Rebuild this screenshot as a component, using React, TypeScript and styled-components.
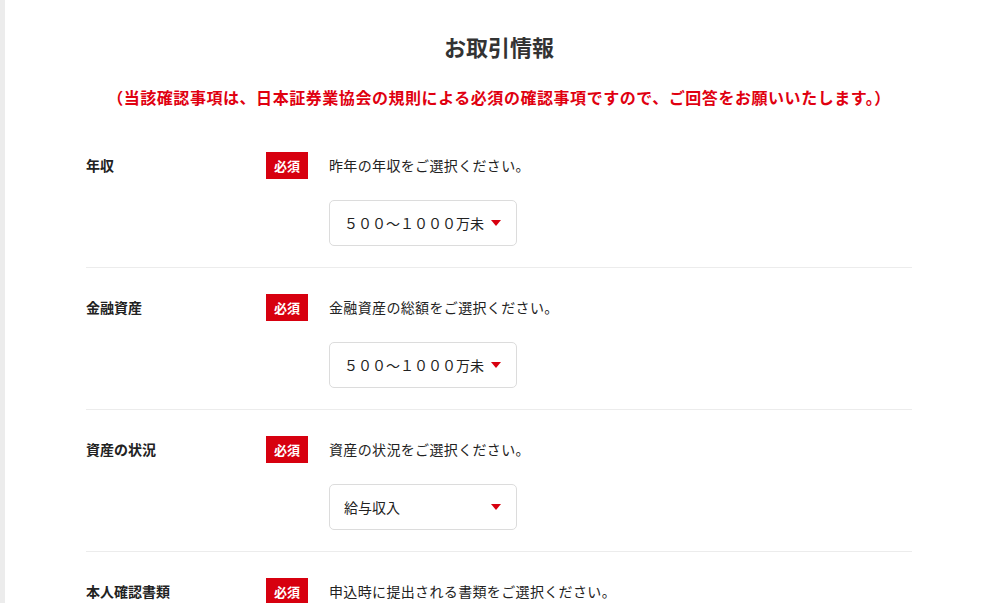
import styled, { createGlobalStyle } from "styled-components";

const GlobalStyle = createGlobalStyle`
  html, body {
    margin: 0;
    padding: 0;
    background: #fff;
  }
  body {
    font-family: "Noto Sans CJK JP", "Noto Sans", sans-serif;
    color: #222;
  }
`;

const Page = styled.div`
  display: flex;
  min-height: 100vh;
`;

const SideBar = styled.div`
  flex: 0 0 5px;
  background: #ececec;
`;

const Main = styled.main`
  flex: 1;
  padding-left: 2px;
`;

const Container = styled.div`
  width: 826px;
  margin: 0 auto;
  padding-top: 32px;
`;

const Title = styled.h2`
  margin: 0;
  font-size: 22px;
  line-height: 28px;
  font-weight: 700;
  color: #333;
  text-align: center;
`;

const Notice = styled.p`
  margin: 25px 0 17px;
  font-size: 16px;
  line-height: 24px;
  font-weight: 700;
  color: #e00010;
  text-align: center;
  letter-spacing: 0.55px;
  white-space: nowrap;
`;

const Row = styled.section`
  display: grid;
  grid-template-columns: 180px 42px 1fr;
  align-items: center;
  padding: 26px 0 21px;
  border-bottom: 1px solid #ececec;
`;

const Label = styled.div`
  font-size: 14px;
  font-weight: 700;
  line-height: 27px;
`;

const Badge = styled.span`
  display: flex;
  align-items: center;
  justify-content: center;
  height: 27px;
  background: #d7000f;
  color: #fff;
  font-size: 13px;
  font-weight: 700;
`;

const Description = styled.div`
  margin-left: 21px;
  font-size: 14px;
  line-height: 27px;
  letter-spacing: 0.35px;
`;

const SelectBox = styled.div`
  grid-column: 3;
  margin: 21px 0 0 21px;
  box-sizing: border-box;
  width: 188px;
  height: 46px;
  display: flex;
  align-items: center;
  justify-content: space-between;
  padding: 0 15px 0 14px;
  border: 1px solid #dcdcdc;
  border-radius: 5px;
  font-size: 14px;
  color: #222;
  white-space: nowrap;
`;

const Arrow = () => (
  <svg width="10" height="6" viewBox="0 0 10 6">
    <path d="M0 0 H10 L5 6 Z" fill="#d7000f" />
  </svg>
);

const fields = [
  {
    label: "年収",
    description: "昨年の年収をご選択ください。",
    value: "５００～１０００万未",
  },
  {
    label: "金融資産",
    description: "金融資産の総額をご選択ください。",
    value: "５００～１０００万未",
  },
  {
    label: "資産の状況",
    description: "資産の状況をご選択ください。",
    value: "給与収入",
  },
  {
    label: "本人確認書類",
    description: "申込時に提出される書類をご選択ください。",
    value: "運転免許証",
  },
];

const App = () => {
  return (
    <>
      <GlobalStyle />
      <Page>
        <SideBar />
        <Main>
          <Container>
            <Title>お取引情報</Title>
            <Notice>
              （当該確認事項は、日本証券業協会の規則による必須の確認事項ですので、ご回答をお願いいたします。）
            </Notice>
            {fields.map((field) => (
              <Row key={field.label}>
                <Label>{field.label}</Label>
                <Badge>必須</Badge>
                <Description>{field.description}</Description>
                <SelectBox>
                  <span>{field.value}</span>
                  <Arrow />
                </SelectBox>
              </Row>
            ))}
          </Container>
        </Main>
      </Page>
    </>
  );
};

export default App;
